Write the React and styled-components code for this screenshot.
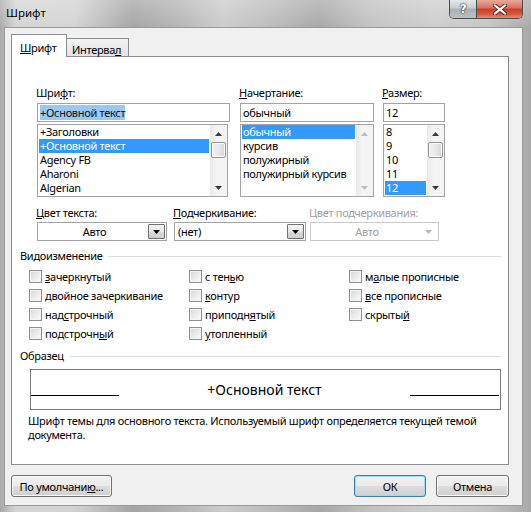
import React from 'react';
import styled, { createGlobalStyle } from 'styled-components';

const GlobalStyle = createGlobalStyle`
  html, body {
    margin: 0;
    padding: 0;
  }
  body {
    width: 531px;
    height: 512px;
    overflow: hidden;
    font-family: "Noto Sans", "Open Sans", sans-serif;
    font-size: 11px;
    letter-spacing: -0.3px;
    color: #000;
  }
`;

// Window frame (Aero glass look)
const Window = styled.div`
  width: 531px;
  height: 512px;
  box-sizing: border-box;
  display: flex;
  flex-direction: column;
  padding: 0 8px 6px 4px;
  background:
    linear-gradient(180deg, rgba(255,255,255,0.25), rgba(255,255,255,0) 30px),
    linear-gradient(90deg, #a9a9a9 0%, #d4d4d4 3%, #d3d3d3 14%, #a4a4a4 25%, #b3b3b3 33%,
      #cbcbcb 42%, #b9b9b9 52%, #a7a7a7 60%, #c2c2c2 70%, #cdcdcd 82%, #c4c4c4 92%, #a8a8a8 100%);
`;

const TitleBar = styled.div`
  height: 27px;
  display: flex;
  align-items: flex-start;
`;

const TitleText = styled.div`
  padding: 5px 0 0 2px;
  font-size: 11.5px;
  line-height: 16px;
  letter-spacing: 0;
`;

const CaptionButtons = styled.div`
  margin-left: auto;
  display: flex;
  height: 18px;
  border: 1px solid #4a4a4a;
  border-top: none;
  border-radius: 0 0 5px 5px;
  overflow: hidden;
  box-shadow: 0 0 1px rgba(255,255,255,0.7);
`;

const HelpButton = styled.div`
  width: 26px;
  display: flex;
  align-items: center;
  justify-content: center;
  background: linear-gradient(180deg, #e4e6e8 0%, #c9cdd1 45%, #a9aeb3 50%, #bcc1c5 100%);
  border-right: 1px solid #4a4a4a;
  color: #fff;
  font-weight: bold;
  font-size: 12px;
  font-family: "DejaVu Sans", sans-serif;
  text-shadow: 0 0 1px #333, 0 0 1px #333, 0 0 2px #555;
`;

const CloseButton = styled.div`
  width: 45px;
  display: flex;
  align-items: center;
  justify-content: center;
  background: linear-gradient(180deg, #e9a99c 0%, #d7705f 45%, #c63d28 50%, #d65a3f 80%, #e5907a 100%);
`;

// Client area
const Client = styled.div`
  flex: 1;
  display: flex;
  flex-direction: column;
  box-sizing: border-box;
  background: #f0f0f0;
  border: 1px solid #9a9a9a;
  padding: 6px 13px 8px 6px;
`;

const TabRow = styled.div`
  display: flex;
  align-items: flex-end;
  height: 23px;
  margin-bottom: -1px;
  position: relative;
  z-index: 1;
`;

const Tab = styled.div`
  box-sizing: border-box;
  border: 1px solid #898c95;
  border-bottom: none;
  white-space: nowrap;
  line-height: 15px;
  ${p => p.$active ? `
    width: 56px;
    height: 23px;
    background: #fff;
    padding: 5px 0 0 8px;
  ` : `
    width: 62px;
    height: 18px;
    margin-bottom: 1px;
    border-left: none;
    background: linear-gradient(180deg, #f3f3f3, #e3e3e3);
    padding: 3px 0 0 5px;
  `}
`;

const Panel = styled.div`
  height: 409px;
  box-sizing: border-box;
  border: 1px solid #898c95;
  background: #fff;
  display: flex;
  flex-direction: column;
`;

const K = styled.span`
  text-decoration: underline;
  text-underline-offset: 1px;
`;

const Acc = ({ t, k }) => (
  k === undefined ? t : <>{t.slice(0, k)}<K>{t[k]}</K>{t.slice(k + 1)}</>
);

// Font / style / size lists
const FontRow = styled.div`
  display: flex;
  padding: 29px 0 0 25px;
`;

const Field = styled.div`
  display: flex;
  flex-direction: column;
  width: ${p => p.$w}px;
  margin-right: ${p => p.$gap || 0}px;
`;

const FieldLabel = styled.div`
  line-height: 14px;
  height: 14px;
  margin: 0 0 ${p => p.$mb ?? 3}px -1px;
  white-space: nowrap;
  color: ${p => p.$disabled ? '#a0a0a0' : '#000'};
`;

const TextInput = styled.div`
  box-sizing: border-box;
  height: 19px;
  border: 1px solid #a3a3a3;
  padding: 0 2px;
  line-height: 17px;
  white-space: nowrap;
  overflow: hidden;
`;

const Selection = styled.span`
  background: #9ac8f3;
  color: #111;
`;

const ListBox = styled.div`
  box-sizing: border-box;
  margin-top: 2px;
  width: ${p => p.$w}px;
  height: 73px;
  border: 1px solid #a3a3a3;
  display: flex;
  overflow: hidden;
`;

const ListItems = styled.div`
  flex: 1;
  min-width: 0;
  padding: 0 1px;
`;

const ListItem = styled.div`
  height: 14px;
  line-height: 14px;
  padding-left: 1px;
  white-space: nowrap;
  overflow: hidden;
  background: ${p => p.$selected ? '#3399ff' : 'transparent'};
  color: ${p => p.$selected ? '#fff' : '#000'};
`;

const ScrollBar = styled.div`
  width: 17px;
  display: flex;
  flex-direction: column;
  background: linear-gradient(90deg, #e9e9e9, #f5f5f5 40%, #f3f3f3);
`;

const ScrollArrow = styled.div`
  height: 17px;
  display: flex;
  align-items: center;
  justify-content: center;
`;

const ScrollTrack = styled.div`
  flex: 1;
  display: flex;
  flex-direction: column;
`;

const ScrollThumb = styled.div`
  box-sizing: border-box;
  height: 16px;
  margin: 0 1px 0 1px;
  border: 1px solid #959595;
  border-radius: 2px;
  background: linear-gradient(90deg, #f3f3f3, #e8e8e8 50%, #d6d6d6);
  box-shadow: inset 0 0 0 1px #fbfbfb;
`;

const Triangle = ({ down, color }) => (
  <svg width="7" height="4" viewBox="0 0 7 4">
    <polygon points={down ? '0,0 7,0 3.5,4' : '0,4 7,4 3.5,0'} fill={color} />
  </svg>
);

const Scroller = ({ disabled, thumb }) => {
  const c = disabled ? '#bdbdbd' : '#3a3a3a';
  return (
    <ScrollBar>
      <ScrollArrow><Triangle color={c} /></ScrollArrow>
      <ScrollTrack>{thumb && <ScrollThumb />}</ScrollTrack>
      <ScrollArrow><Triangle down color={c} /></ScrollArrow>
    </ScrollBar>
  );
};

// Colour / underline combos
const ComboRow = styled.div`
  display: flex;
  padding: 9px 0 0 25px;
`;

const ComboBox = styled.div`
  box-sizing: border-box;
  width: ${p => p.$w}px;
  height: 19px;
  border: 1px solid ${p => p.$disabled ? '#c9c9c9' : '#a3a3a3'};
  background: #fff;
  display: flex;
  align-items: center;
  padding-right: 1px;
`;

const ComboValue = styled.div`
  flex: 1;
  line-height: 17px;
  padding-left: 3px;
  text-align: ${p => p.$center ? 'center' : 'left'};
  color: ${p => p.$disabled ? '#a0a0a0' : '#000'};
`;

const ComboButton = styled.div`
  box-sizing: border-box;
  width: 17px;
  height: 15px;
  display: flex;
  align-items: center;
  justify-content: center;
  border: 1px solid ${p => p.$disabled ? 'transparent' : '#707070'};
  border-radius: 1px;
  background: ${p => p.$disabled ? 'transparent' : 'linear-gradient(180deg, #f4f4f4 0%, #e7e7e7 50%, #d9d9d9 51%, #cdcdcd 100%)'};
`;

// Groups
const GroupHeader = styled.div`
  display: flex;
  align-items: center;
  padding: 0 7px 0 8px;
  margin-top: ${p => p.$mt}px;
  height: 14px;
`;

const GroupTitle = styled.div`
  line-height: 14px;
  white-space: nowrap;
`;

const GroupLine = styled.div`
  flex: 1;
  height: 1px;
  margin-left: 6px;
  background: #d5dfe5;
`;

const CheckGrid = styled.div`
  display: grid;
  grid-template-columns: repeat(3, 160px);
  grid-template-rows: repeat(4, 19px);
  grid-auto-flow: column;
  padding-left: 17px;
  margin-top: 4px;
`;

const CheckItem = styled.div`
  display: flex;
  align-items: center;
  white-space: nowrap;
`;

const CheckBox = styled.div`
  box-sizing: border-box;
  width: 13px;
  height: 13px;
  margin-right: 3px;
  border: 1px solid #8e8f8f;
  background: linear-gradient(135deg, #d7d7d7 0%, #eaeaea 50%, #fdfdfd 100%);
  box-shadow: inset 0 0 0 1px #f4f4f4;
`;

// Sample
const PreviewBox = styled.div`
  box-sizing: border-box;
  width: 471px;
  height: 41px;
  margin: 6px 0 0 18px;
  border: 1px solid #7a7a7a;
  display: flex;
  align-items: flex-start;
`;

const PreviewLine = styled.div`
  width: ${p => p.$w}px;
  height: 1px;
  margin-top: 25px;
  margin-right: ${p => p.$mr || 0}px;
  background: #000;
`;

const PreviewText = styled.div`
  flex: 1;
  text-align: center;
  font-size: 14px;
  letter-spacing: 0;
  line-height: 18px;
  margin-top: 11px;
`;

const Description = styled.div`
  padding-left: 16px;
  margin-top: 4px;
  line-height: 13.5px;
  white-space: nowrap;
`;

// Bottom buttons
const ButtonRow = styled.div`
  display: flex;
  margin-top: 10px;
  height: 22px;
`;

const Spacer = styled.div`
  flex: 1;
`;

const Button = styled.div`
  box-sizing: border-box;
  width: ${p => p.$w}px;
  margin-left: ${p => p.$ml || 0}px;
  height: 22px;
  display: flex;
  align-items: center;
  justify-content: center;
  border: 1px solid ${p => p.$default ? '#3c7fb1' : '#707070'};
  border-radius: 3px;
  background: linear-gradient(180deg, #f2f2f2 0%, #ebebeb 48%, #dddddd 52%, #cfcfcf 100%);
  box-shadow: inset 0 0 0 1px ${p => p.$default ? '#9edbf7' : '#fafafa'};
  white-space: nowrap;
`;

const fonts = [
  { t: '+Заголовки' },
  { t: '+Основной текст', s: true },
  { t: 'Agency FB' },
  { t: 'Aharoni' },
  { t: 'Algerian' },
];
const styles = [
  { t: 'обычный', s: true },
  { t: 'курсив' },
  { t: 'полужирный' },
  { t: 'полужирный курсив' },
];
const sizes = [{ t: '8' }, { t: '9' }, { t: '10' }, { t: '11' }, { t: '12', s: true }];

const effects = [
  ['зачеркнутый', 0], ['двойное зачеркивание', 0], ['надстрочный', 3], ['подстрочный', 9],
  ['с тенью', 5], ['контур', 0], ['приподнятый', 7], ['утопленный', 0],
  ['малые прописные', 1], ['все прописные', 0], ['скрытый', 6],
];

const CloseIcon = () => (
  <svg width="14" height="11" viewBox="0 0 14 11">
    <path d="M2 1.5 L12 9.5 M12 1.5 L2 9.5" stroke="#4a2a24" strokeWidth="4" strokeLinecap="square" />
    <path d="M2 1.5 L12 9.5 M12 1.5 L2 9.5" stroke="#ffffff" strokeWidth="2.2" strokeLinecap="square" />
  </svg>
);

export default function App() {
  return (
    <>
      <GlobalStyle />
      <Window>
        <TitleBar>
          <TitleText>Шрифт</TitleText>
          <CaptionButtons>
            <HelpButton>?</HelpButton>
            <CloseButton><CloseIcon /></CloseButton>
          </CaptionButtons>
        </TitleBar>
        <Client>
          <TabRow>
            <Tab $active><Acc t="Шрифт" k={0} /></Tab>
            <Tab><Acc t="Интервал" k={7} /></Tab>
          </TabRow>
          <Panel>
            <FontRow>
              <Field $w={193} $gap={10}>
                <FieldLabel><Acc t="Шрифт:" k={3} /></FieldLabel>
                <TextInput><Selection>+Основной текст</Selection></TextInput>
                <ListBox $w={191}>
                  <ListItems>
                    {fonts.map(f => <ListItem key={f.t} $selected={f.s}>{f.t}</ListItem>)}
                  </ListItems>
                  <Scroller thumb />
                </ListBox>
              </Field>
              <Field $w={134} $gap={9}>
                <FieldLabel><Acc t="Начертание:" k={0} /></FieldLabel>
                <TextInput>обычный</TextInput>
                <ListBox $w={134}>
                  <ListItems>
                    {styles.map(f => <ListItem key={f.t} $selected={f.s}>{f.t}</ListItem>)}
                  </ListItems>
                  <Scroller disabled />
                </ListBox>
              </Field>
              <Field $w={62}>
                <FieldLabel><Acc t="Размер:" k={0} /></FieldLabel>
                <TextInput>12</TextInput>
                <ListBox $w={62}>
                  <ListItems>
                    {sizes.map(f => <ListItem key={f.t} $selected={f.s}>{f.t}</ListItem>)}
                  </ListItems>
                  <Scroller thumb />
                </ListBox>
              </Field>
            </FontRow>

            <ComboRow>
              <Field $w={130} $gap={7}>
                <FieldLabel $mb={2}><Acc t="Цвет текста:" k={0} /></FieldLabel>
                <ComboBox $w={130}>
                  <ComboValue $center>Авто</ComboValue>
                  <ComboButton><Triangle down color="#000" /></ComboButton>
                </ComboBox>
              </Field>
              <Field $w={132} $gap={4}>
                <FieldLabel $mb={2}><Acc t="Подчеркивание:" k={0} /></FieldLabel>
                <ComboBox $w={132}>
                  <ComboValue>(нет)</ComboValue>
                  <ComboButton><Triangle down color="#000" /></ComboButton>
                </ComboBox>
              </Field>
              <Field $w={129}>
                <FieldLabel $mb={2} $disabled>Цвет подчеркивания:</FieldLabel>
                <ComboBox $w={129} $disabled>
                  <ComboValue $center $disabled>Авто</ComboValue>
                  <ComboButton $disabled><Triangle down color="#b8b8b8" /></ComboButton>
                </ComboBox>
              </Field>
            </ComboRow>

            <GroupHeader $mt={8}>
              <GroupTitle>Видоизменение</GroupTitle>
              <GroupLine />
            </GroupHeader>
            <CheckGrid>
              {effects.map(([t, k]) => (
                <CheckItem key={t}>
                  <CheckBox />
                  <span><Acc t={t} k={k} /></span>
                </CheckItem>
              ))}
            </CheckGrid>

            <GroupHeader $mt={6}>
              <GroupTitle>Образец</GroupTitle>
              <GroupLine />
            </GroupHeader>
            <PreviewBox>
              <PreviewLine $w={88} />
              <PreviewText>+Основной текст</PreviewText>
              <PreviewLine $w={89} $mr={1} />
            </PreviewBox>
            <Description>
              Шрифт темы для основного текста. Используемый шрифт определяется текущей темой<br />
              документа.
            </Description>
          </Panel>
          <ButtonRow>
            <Button $w={101}><Acc t="По умолчанию..." k={11} /></Button>
            <Spacer />
            <Button $w={72} $default>ОК</Button>
            <Button $w={73} $ml={10}>Отмена</Button>
          </ButtonRow>
        </Client>
      </Window>
    </>
  );
}
